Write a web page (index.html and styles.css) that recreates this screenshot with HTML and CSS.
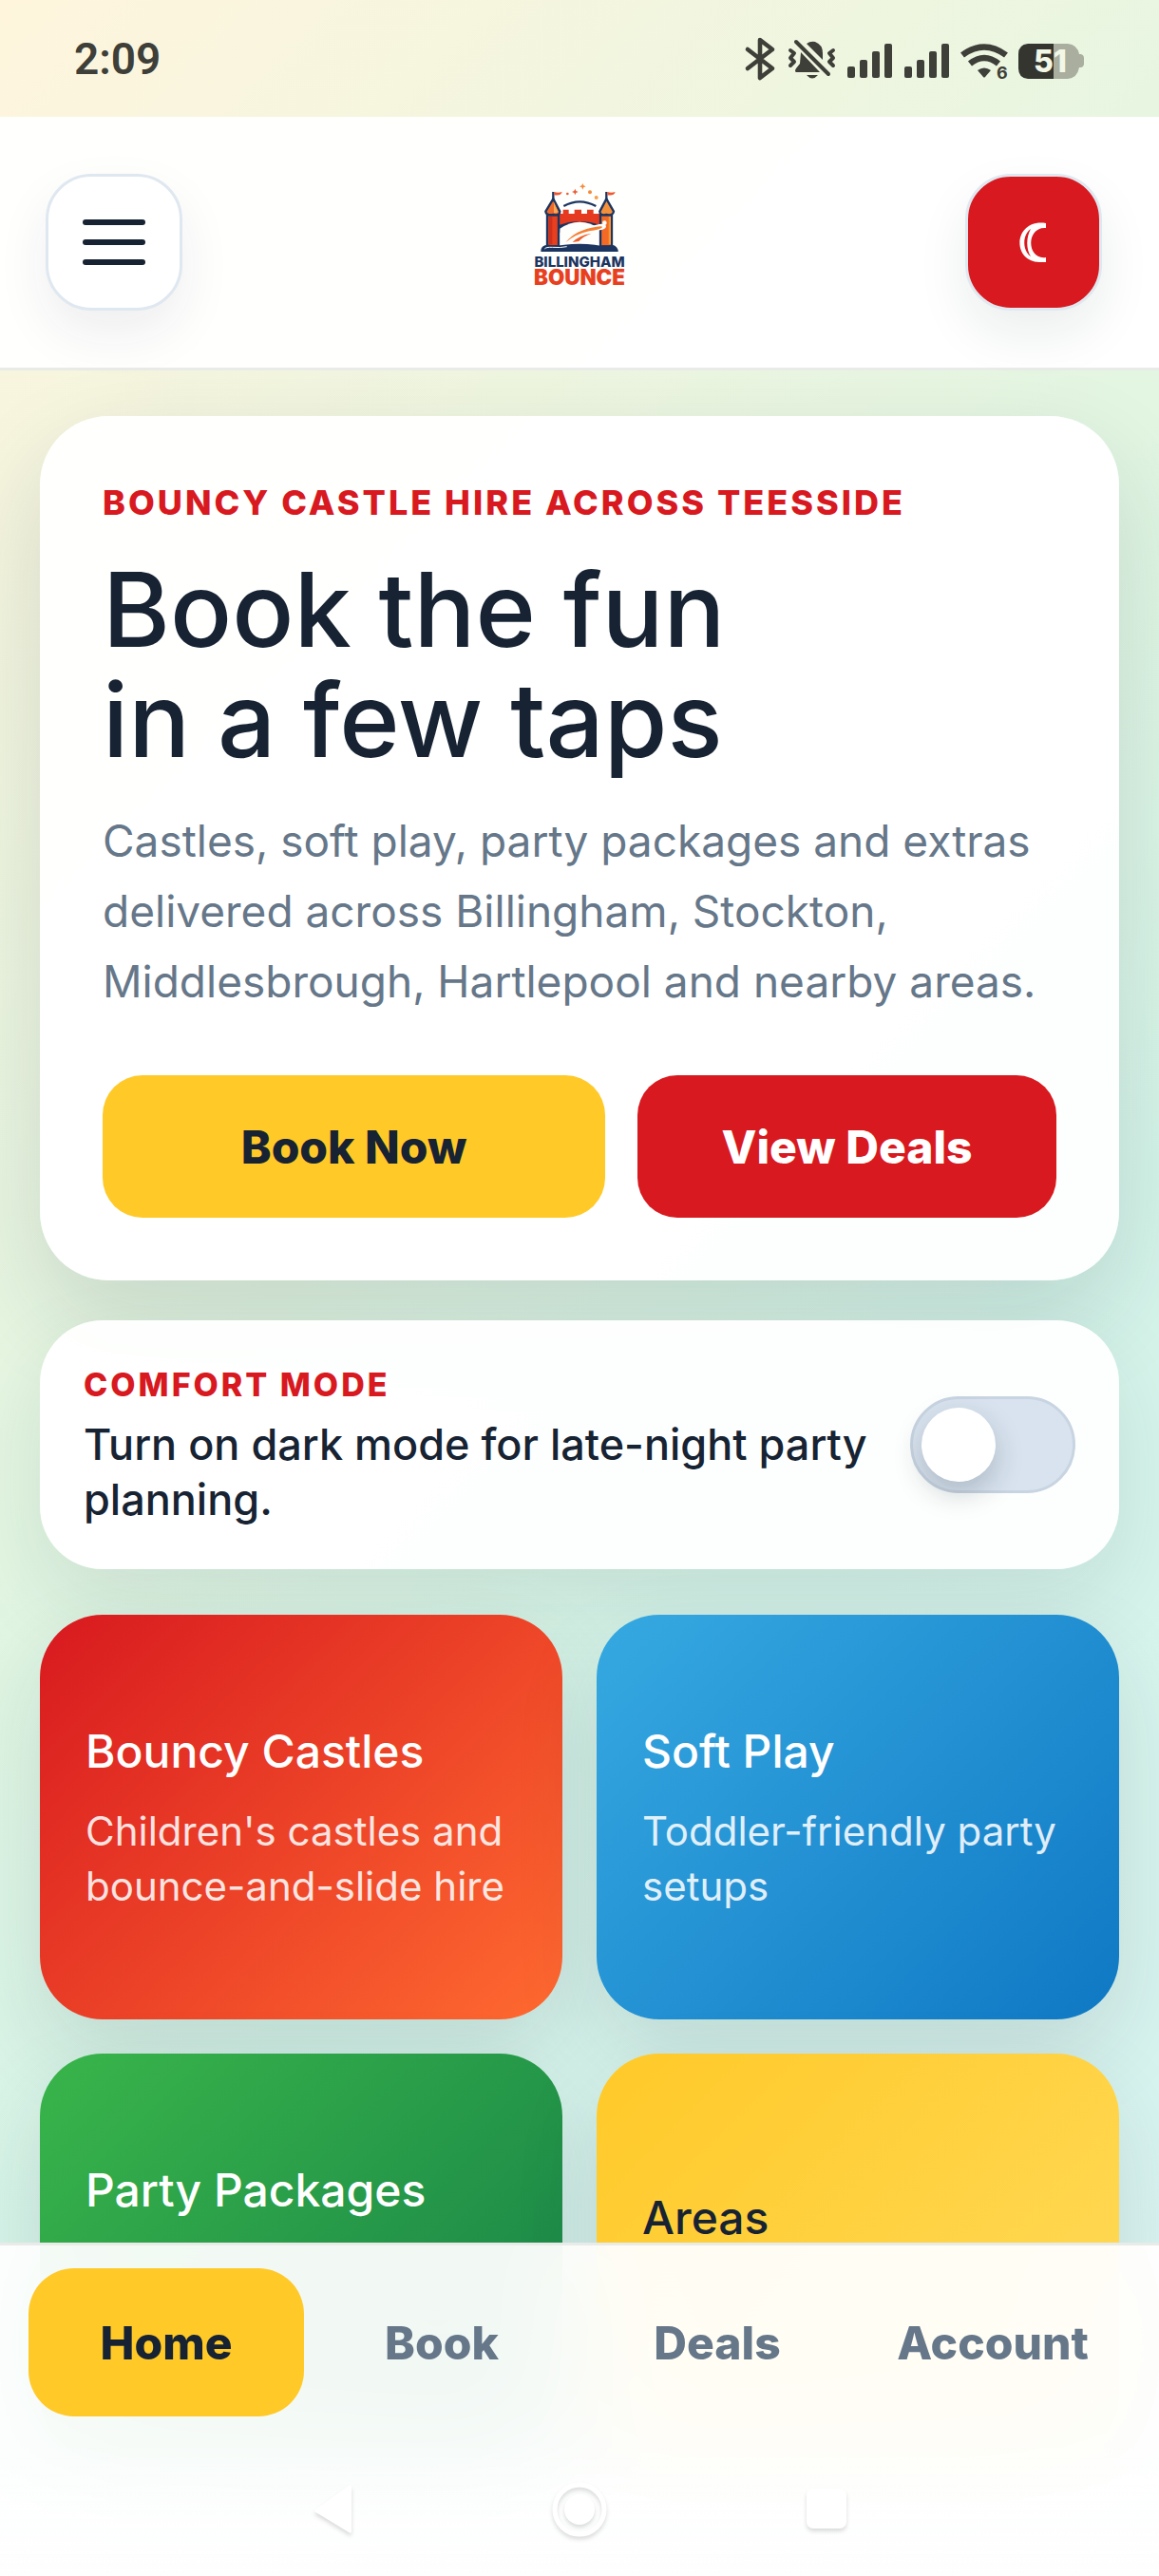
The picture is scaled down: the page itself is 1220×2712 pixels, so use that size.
FILE: index.html
```html
<!DOCTYPE html>
<html lang="en">
<head>
    <meta charset="UTF-8">
    <meta name="viewport" content="width=device-width, initial-scale=1.0">
    <title>Billingham Bounce</title>
    <link rel="stylesheet" href="styles.css">
</head>
<body>
    <div class="status-bar">
        <span class="time">2:09</span>
        <svg class="status-icons" width="362" height="48" viewBox="0 0 362 48" aria-hidden="true">
            <!-- bluetooth -->
            <path d="M4 14L30 34L17 44V4L30 14L4 34" fill="none" stroke="#3e3f38" stroke-width="4.6" stroke-linecap="round" stroke-linejoin="round"/>
            <!-- muted bell -->
            <g fill="#3e3f38">
                <path d="M60 17L80 38H55Q53 37 55 34L59 29Z"/>
                <path d="M66 8Q70 5 75 6Q83 9 83 18V25Z"/>
                <path d="M66 41H78Q72 48 66 41Z"/>
            </g>
            <g fill="none" stroke="#3e3f38" stroke-width="4" stroke-linecap="round" stroke-linejoin="round">
                <path d="M55 6L89 40"/>
                <path d="M49 15L53 18L49 23L53 27L49 31"/>
                <path d="M94 15L90 18L94 23L90 27L94 31"/>
            </g>
            <!-- signal bars -->
            <g fill="#3e3f38">
                <rect x="109" y="32" width="8" height="12" rx="2"/>
                <rect x="122" y="25" width="8" height="19" rx="2"/>
                <rect x="135" y="16" width="8" height="28" rx="2"/>
                <rect x="148" y="8" width="8" height="36" rx="2"/>
                <rect x="169" y="32" width="8" height="12" rx="2"/>
                <rect x="182" y="25" width="8" height="19" rx="2"/>
                <rect x="195" y="16" width="8" height="28" rx="2"/>
                <rect x="208" y="8" width="8" height="36" rx="2"/>
            </g>
            <!-- wifi -->
            <g fill="none" stroke="#3e3f38" stroke-width="6.5">
                <path d="M230 20Q253 3 276 20"/>
                <path d="M238 29Q253 17 268 29"/>
            </g>
            <path d="M246 36Q253 31 260 36L254 43Q253 44 252 43Z" fill="#3e3f38"/>
            <text x="266" y="45" font-size="18" font-weight="700" fill="#3e3f38">6</text>
            <!-- battery -->
            <path d="M326 8H341Q351 9 353 19H355Q358 20 358 23V29Q358 32 355 33H353Q351 44 341 45H326Z" fill="#a9ae9f"/>
            <path d="M326 8H299Q289 9 289 19V34Q289 44 299 45H326Z" fill="#34352f"/>
            <text x="305" y="38" font-size="32" font-weight="800" fill="#f3f7e6">51</text>
        </svg>
    </div>

    <header class="topbar">
        <button class="icon-btn menu-btn" aria-label="Open menu">
            <span></span>
            <span></span>
            <span></span>
        </button>
        <a href="#" class="brand" aria-label="Billingham Bounce">
            <svg width="140" height="150" viewBox="0 0 420 450">
                <!-- flags and confetti -->
                <g stroke="#1c3560" stroke-width="7" fill="none">
                    <path d="M127 66V100M295 66V100"/>
                    <path d="M160 111Q210 83 262 111"/>
                </g>
                <path d="M130 66Q142 70 155 66Q152 79 130 76Z" fill="#f2552c"/>
                <path d="M298 66Q310 70 323 66Q320 79 298 76Z" fill="#f2552c"/>
                <path d="M196 56L199 63L206 66L199 69L196 76L193 69L186 66L193 63Z" fill="#ec5b35"/>
                <path d="M220 39L223 46L230 49L223 52L220 59L217 52L210 49L217 46Z" fill="#f58a3c"/>
                <circle cx="172" cy="72" r="4" fill="#ec5b35"/>
                <circle cx="243" cy="67" r="6" fill="#f58a3c"/>
                <circle cx="263" cy="84" r="6" fill="#f6a04a"/>
                <!-- wall -->
                <path d="M142 135H158V122H176V135H194V122H216V135H234V122H254V135H280V200Q212 130 142 200Z" fill="#e53a1f"/>
                <path d="M143 192Q210 128 279 192V172Q210 146 143 172Z" fill="#1c3560"/>
                <path d="M148 236V182Q210 140 274 182V236Z" fill="#fefefd"/>
                <!-- towers -->
                <g stroke="#1c3560" stroke-width="7" stroke-linejoin="round">
                    <path d="M108 138H144V238H108Z" fill="#e8401f"/>
                    <path d="M276 138H312V238H276Z" fill="#f26a26"/>
                    <path d="M127 88L148 128Q148 142 127 138Q106 142 103 128Z" fill="#ef6a2a"/>
                    <path d="M295 88L318 128Q316 142 295 138Q274 142 274 128Z" fill="#f5903a"/>
                </g>
                <path d="M129 98L142 128Q138 134 129 132Z" fill="#f9a957"/>
                <path d="M114 144H124V232H114Z" fill="#cf2f1c"/>
                <path d="M302 144H309V232H302Z" fill="#fb9636"/>
                <!-- slide -->
                <path d="M158 234Q190 184 272 168Q294 164 294 176Q292 186 262 188L186 238Z" fill="#fefefd"/>
                <path d="M166 226Q196 186 264 176Q284 173 282 178Q276 186 240 190Q196 200 166 226Z" fill="#f58034"/>
                <path d="M188 225Q208 203 248 197Q222 206 208 222Z" fill="#ee5f2c"/>
                <circle cx="289" cy="164" r="7" fill="#fefefd"/>
                <path d="M88 255Q86 234 112 233Q140 236 162 233Q210 228 258 233Q286 238 314 233Q332 238 332 255Z" fill="#1c3560"/>
                <path d="M100 246Q104 240 124 241Q150 243 170 239" stroke="#fefefd" stroke-width="3" fill="none"/>
                <text x="210" y="303" text-anchor="middle" font-size="45" font-weight="800" fill="#1c3560">BILLINGHAM</text>
                <text x="210" y="360" text-anchor="middle" font-size="67" font-weight="900" fill="#e8401f">BOUNCE</text>
            </svg>
        </a>
        <button class="icon-btn theme-btn" aria-label="Toggle dark mode">
            <svg width="30" height="44" viewBox="3 0 30 44">
                <path d="M31 2C-3 -3 -6 42 24 43C27 43 29 43 31 43V38C10 41 10 5 31 7Z" fill="#fff"/>
                <path d="M15 8C6 14 6 31 15 37C10 29 10 17 15 8Z" fill="#d8191f"/>
            </svg>
        </button>
    </header>

    <main class="page">
        <section class="hero">
            <p class="eyebrow">BOUNCY CASTLE HIRE ACROSS TEESSIDE</p>
            <h1>Book the fun<br>in a few taps</h1>
            <p class="lead">Castles, soft play, party packages and extras delivered across Billingham, Stockton, Middlesbrough, Hartlepool and nearby areas.</p>
            <div class="actions">
                <button class="btn btn-yellow">Book Now</button>
                <button class="btn btn-red">View Deals</button>
            </div>
        </section>

        <section class="comfort">
            <label for="darkMode">
                <span class="comfort-title">COMFORT MODE</span>
                <span class="comfort-text">Turn on dark mode for late-night party planning.</span>
            </label>
            <input type="checkbox" id="darkMode" class="switch">
        </section>

        <section class="tiles">
            <a href="#" class="tile tile-red">
                <strong>Bouncy Castles</strong>
                <span>Children's castles and bounce-and-slide hire</span>
            </a>
            <a href="#" class="tile tile-blue">
                <strong>Soft Play</strong>
                <span>Toddler-friendly party setups</span>
            </a>
            <a href="#" class="tile tile-green">
                <strong>Party Packages</strong>
            </a>
            <a href="#" class="tile tile-yellow">
                <strong>Areas</strong>
            </a>
        </section>
    </main>

    <div class="bottom">
        <nav class="tabs">
            <a href="#" class="active">Home</a>
            <a href="#">Book</a>
            <a href="#">Deals</a>
            <a href="#">Account</a>
        </nav>
        <div class="system-nav">
            <button aria-label="Back">
                <svg width="64" height="70" viewBox="0 0 64 70"><path d="M13 36L49 10Q52 9 52 12V58Q52 61 49 59L13 37Z" fill="#fff"/></svg>
            </button>
            <button aria-label="Home screen">
                <svg width="64" height="70" viewBox="0 0 64 70"><circle cx="32" cy="35" r="26" fill="none" stroke="#fff" stroke-width="5"/><circle cx="32" cy="35" r="16" fill="#fff"/></svg>
            </button>
            <button aria-label="Recent apps">
                <svg width="64" height="70" viewBox="0 0 64 70"><rect x="11" y="13" width="42" height="42" rx="7" fill="#fff"/></svg>
            </button>
        </div>
    </div>
</body>
</html>
```
FILE: styles.css
```css
* {
    box-sizing: border-box;
}

body {
    margin: 0;
    height: 100vh;
    display: flex;
    flex-direction: column;
    overflow: hidden;
    font-family: Inter, 'Open Sans', sans-serif;
    color: #172333;
    background: linear-gradient(135deg, #fff5dd 0%, #e2f6e2 42%, #d5f4e9 62%, #daf4f3 100%);
}

h1, p {
    margin: 0;
}

a {
    color: inherit;
    text-decoration: none;
}

button {
    font-family: inherit;
    border: none;
    cursor: pointer;
}

.status-bar {
    flex: none;
    height: 123px;
    padding: 0 75px 0 78px;
    display: flex;
    align-items: center;
    justify-content: space-between;
}

.time {
    font-family: Roboto, sans-serif;
    font-size: 46px;
    font-weight: 600;
    color: #3e3f38;
}

/* top bar */
.topbar {
    flex: none;
    height: 267px;
    padding: 0 48px;
    display: grid;
    grid-template-columns: 1fr auto 1fr;
    align-items: center;
    background: rgba(255, 255, 255, 0.95);
    border-bottom: 3px solid #e9ebe9;
}

.brand svg {
    display: block;
}

.icon-btn {
    width: 144px;
    height: 144px;
    display: flex;
    flex-direction: column;
    align-items: center;
    justify-content: center;
    border: 3px solid #dfe8f0;
    border-radius: 48px;
    box-shadow: 0 24px 54px rgba(23, 35, 51, 0.08);
}

.menu-btn {
    gap: 15px;
    background: #fff;
}

.menu-btn span {
    width: 66px;
    height: 6px;
    border-radius: 3px;
    background: #172333;
}

.theme-btn {
    justify-self: end;
    margin-right: 12px;
    background: #d8191f;
}

/* content */
.page {
    flex: 1;
    min-height: 0;
    overflow-y: auto;
    scrollbar-width: none;
    padding: 48px 42px 400px;
}

.hero {
    padding: 66px;
    border-radius: 72px;
    background: rgba(255, 255, 255, 0.95);
    box-shadow: 0 42px 105px rgba(23, 35, 51, 0.14);
}

.eyebrow {
    font-size: 36px;
    line-height: 50px;
    font-weight: 800;
    letter-spacing: 3px;
    color: #d8191f;
}

h1 {
    margin-top: 30px;
    font-size: 108px;
    line-height: 116px;
    font-weight: 500;
}

.lead {
    margin-top: 32px;
    font-size: 46px;
    line-height: 74px;
    color: #66778a;
}

.actions {
    margin-top: 62px;
    display: grid;
    grid-template-columns: 1.2fr 1fr;
    gap: 34px;
}

.btn {
    height: 150px;
    border-radius: 42px;
    font-size: 48px;
    font-weight: 800;
}

.btn-yellow {
    background: #ffc928;
    color: #172333;
}

.btn-red {
    background: #d8191f;
    color: #fff;
}

.comfort {
    margin-top: 42px;
    padding: 44px 46px;
    display: flex;
    align-items: center;
    justify-content: space-between;
    gap: 36px;
    border-radius: 66px;
    background: rgba(255, 255, 255, 0.95);
    box-shadow: 0 36px 90px rgba(23, 35, 51, 0.1);
}

.comfort-title {
    display: block;
    margin-bottom: 10px;
    font-size: 34px;
    line-height: 48px;
    font-weight: 800;
    letter-spacing: 3px;
    color: #d8191f;
}

.comfort-text {
    display: block;
    font-size: 45px;
    line-height: 58px;
    font-weight: 500;
}

.switch {
    flex: none;
    appearance: none;
    width: 174px;
    height: 102px;
    margin: 0;
    padding: 9px;
    border: 3px solid #c8d4e1;
    border-radius: 51px;
    background: #d8e3ef;
    cursor: pointer;
}

.switch::before {
    content: '';
    display: block;
    width: 78px;
    height: 78px;
    border-radius: 50%;
    background: #fff;
    box-shadow: 0 12px 30px rgba(23, 35, 51, 0.22);
}

.switch:checked::before {
    margin-left: auto;
}

.tiles {
    margin-top: 48px;
    display: grid;
    grid-template-columns: 1fr 1fr;
    gap: 36px;
}

.tile {
    height: 426px;
    padding: 0 48px;
    display: flex;
    flex-direction: column;
    justify-content: center;
    border-radius: 66px;
    color: #fff;
    box-shadow: 0 36px 90px rgba(23, 35, 51, 0.12);
}

.tile strong {
    font-size: 48px;
    line-height: 66px;
    font-weight: 500;
}

.tile span {
    margin-top: 22px;
    font-size: 42px;
    line-height: 58px;
    opacity: 0.86;
}

.tile-red {
    background: linear-gradient(135deg, #d8191f, #ff6a30);
}

.tile-blue {
    background: linear-gradient(135deg, #36a9e1, #0f78c4);
}

.tile-green {
    justify-content: flex-start;
    padding-top: 111px;
    background: linear-gradient(135deg, #39b54a, #168048);
}

.tile-yellow {
    justify-content: flex-start;
    padding-top: 140px;
    background: linear-gradient(135deg, #ffc928, #ffdb5c);
    color: #172333;
}

/* tab bar stays over the scrolling page */
.bottom {
    position: fixed;
    left: 0;
    right: 0;
    bottom: 0;
    background: linear-gradient(rgba(255, 255, 255, 0.94) 60%, #fefefe);
    backdrop-filter: blur(54px);
    border-top: 3px solid #e9ebe9;
}

.tabs {
    padding: 24px 30px 0;
    display: grid;
    grid-template-columns: repeat(4, 1fr);
}

.tabs a {
    height: 156px;
    display: flex;
    align-items: center;
    justify-content: center;
    border-radius: 48px;
    font-size: 48px;
    font-weight: 800;
    color: #66778a;
}

.tabs .active {
    background: #ffc928;
    color: #172333;
}

.system-nav {
    height: 168px;
    padding: 63px 318px 0;
    display: flex;
    justify-content: space-between;
    align-items: flex-start;
}

.system-nav button {
    padding: 0;
    background: none;
}

.system-nav svg {
    display: block;
    filter: drop-shadow(0 3px 2px rgba(0, 0, 0, 0.14));
}
```
